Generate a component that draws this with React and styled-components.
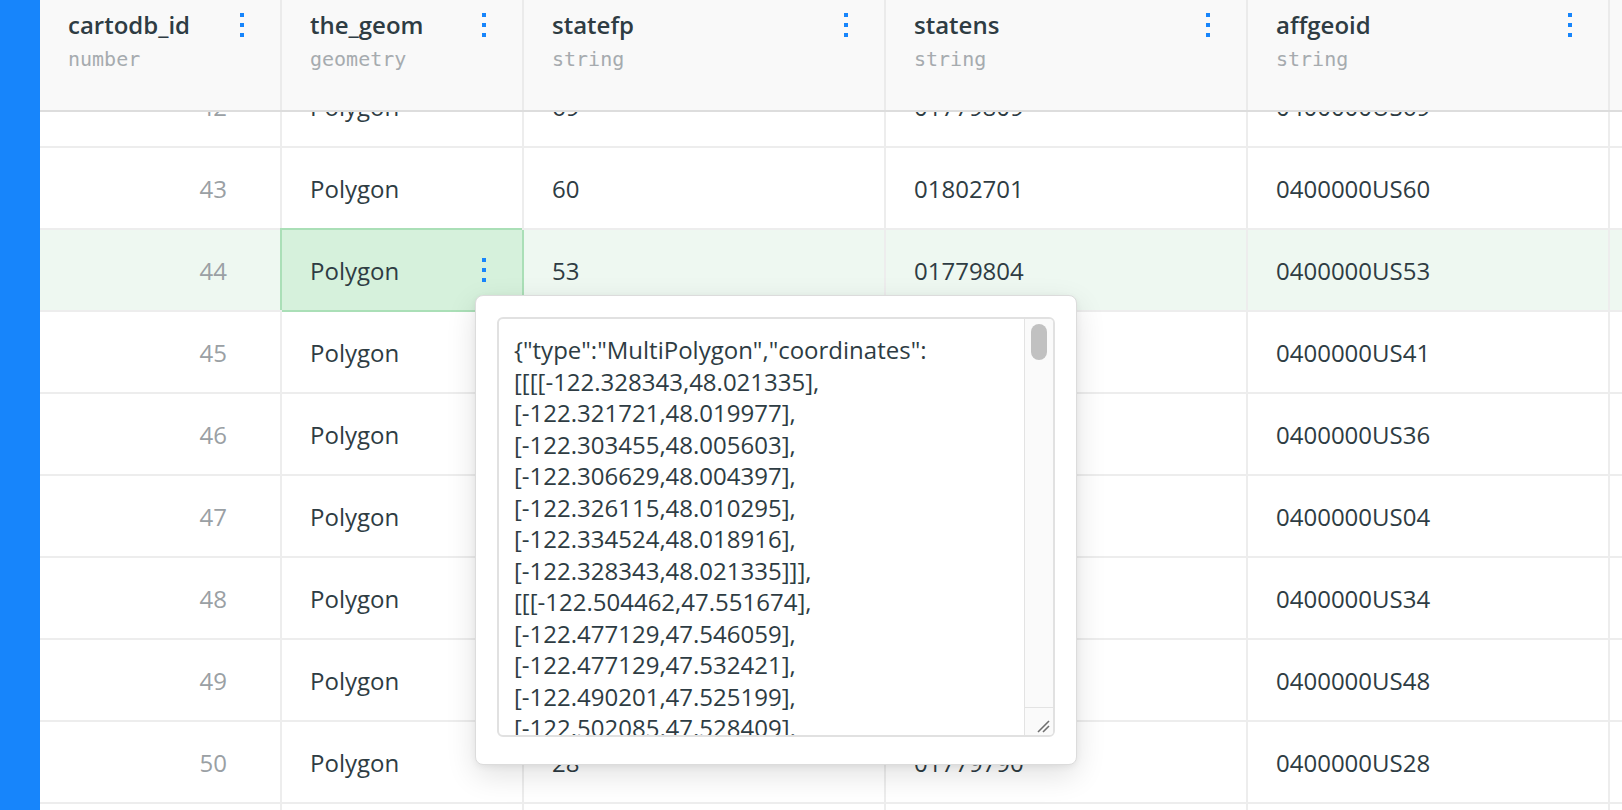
import React from 'react'
import styled, { createGlobalStyle } from 'styled-components'

const GlobalStyle = createGlobalStyle`
  html, body {
    margin: 0;
    padding: 0;
    height: 100%;
    overflow: hidden;
    background: #ffffff;
  }
  body {
    font-family: 'Open Sans', 'Noto Sans', sans-serif;
    color: #2e3c43;
  }
  #root {
    height: 100%;
  }
`

const columns = [
  { key: 'id', title: 'cartodb_id', type: 'number', width: 242, align: 'right' },
  { key: 'geom', title: 'the_geom', type: 'geometry', width: 242 },
  { key: 'statefp', title: 'statefp', type: 'string', width: 362 },
  { key: 'statens', title: 'statens', type: 'string', width: 362 },
  { key: 'affgeoid', title: 'affgeoid', type: 'string', width: 362 },
]

const rows = [
  { id: 42, geom: 'Polygon', statefp: '69', statens: '01779809', affgeoid: '0400000US69' },
  { id: 43, geom: 'Polygon', statefp: '60', statens: '01802701', affgeoid: '0400000US60' },
  { id: 44, geom: 'Polygon', statefp: '53', statens: '01779804', affgeoid: '0400000US53' },
  { id: 45, geom: 'Polygon', statefp: '41', statens: '01155107', affgeoid: '0400000US41' },
  { id: 46, geom: 'Polygon', statefp: '36', statens: '01779796', affgeoid: '0400000US36' },
  { id: 47, geom: 'Polygon', statefp: '04', statens: '01779777', affgeoid: '0400000US04' },
  { id: 48, geom: 'Polygon', statefp: '34', statens: '01779795', affgeoid: '0400000US34' },
  { id: 49, geom: 'Polygon', statefp: '48', statens: '01779801', affgeoid: '0400000US48' },
  { id: 50, geom: 'Polygon', statefp: '28', statens: '01779790', affgeoid: '0400000US28' },
  { id: 51, geom: 'Polygon', statefp: '37', statens: '01027616', affgeoid: '0400000US37' },
]

const geoJson = [
  '{"type":"MultiPolygon","coordinates":',
  '[[[[-122.328343,48.021335],',
  '[-122.321721,48.019977],',
  '[-122.303455,48.005603],',
  '[-122.306629,48.004397],',
  '[-122.326115,48.010295],',
  '[-122.334524,48.018916],',
  '[-122.328343,48.021335]]],',
  '[[[-122.504462,47.551674],',
  '[-122.477129,47.546059],',
  '[-122.477129,47.532421],',
  '[-122.490201,47.525199],',
  '[-122.502085,47.528409],',
  '[-122.507212,47.536011],',
  '[-122.504462,47.551674]]],',
].join('\n')

const SELECTED_ROW = 44

function Kebab() {
  return (
    <Dots>
      <Dot />
      <Dot />
      <Dot />
    </Dots>
  )
}

export default function App() {
  return (
    <>
      <GlobalStyle />
      <Page>
        <SideBar />
        <TableArea>
          <HeaderRow>
            {columns.map((col) => (
              <HeaderCell key={col.key} $width={col.width}>
                <HeaderText>
                  <Title>{col.title}</Title>
                  <TypeLabel>{col.type}</TypeLabel>
                </HeaderText>
                <HeaderKebab>
                  <Kebab />
                </HeaderKebab>
              </HeaderCell>
            ))}
            <HeaderFiller />
          </HeaderRow>
          <Body>
            <BodyScroll>
              {rows.map((row) => {
                const rowSelected = row.id === SELECTED_ROW
                return (
                  <Row key={row.id} $selected={rowSelected}>
                    {columns.map((col) => {
                      const active = rowSelected && col.key === 'geom'
                      return (
                        <Cell
                          key={col.key}
                          $width={col.width}
                          $right={col.align === 'right'}
                          $muted={col.key === 'id'}
                          $active={active}
                        >
                          {row[col.key]}
                          {active && <Kebab />}
                        </Cell>
                      )
                    })}
                    <CellFiller />
                  </Row>
                )
              })}
            </BodyScroll>
          </Body>
        </TableArea>

        <Popover>
          <Field>
            <FieldText>{geoJson}</FieldText>
            <ScrollTrack>
              <Thumb />
              <Corner>
                <svg width='28' height='27' viewBox='0 0 28 27'>
                  <line x1='13' y1='24' x2='24' y2='13' stroke='#6f6f6f' strokeWidth='1.6' />
                  <line x1='18' y1='24' x2='24' y2='18' stroke='#6f6f6f' strokeWidth='1.6' />
                </svg>
              </Corner>
            </ScrollTrack>
          </Field>
        </Popover>
      </Page>
    </>
  )
}

const Page = styled.div`
  position: relative;
  display: flex;
  width: 1622px;
  height: 810px;
  overflow: hidden;
`

const SideBar = styled.div`
  flex: 0 0 40px;
  background: #1785fb;
`

const TableArea = styled.div`
  flex: 1;
  min-width: 0;
  display: flex;
  flex-direction: column;
  overflow: hidden;
`

const HeaderRow = styled.div`
  flex: 0 0 112px;
  display: flex;
  box-sizing: border-box;
  background: #f9f9f9;
  border-bottom: 2px solid #dddddd;
`

const HeaderCell = styled.div`
  flex: 0 0 ${(p) => p.$width}px;
  box-sizing: border-box;
  display: flex;
  align-items: flex-start;
  justify-content: space-between;
  padding: 9px 30px 0 28px;
  border-right: 2px solid #ebebeb;
`

const HeaderFiller = styled.div`
  flex: 1;
`

const HeaderText = styled.div`
  display: flex;
  flex-direction: column;
`

const Title = styled.span`
  font-size: 24px;
  font-weight: 600;
  line-height: 32px;
  color: #2e3c43;
`

const TypeLabel = styled.span`
  font-family: 'DejaVu Sans Mono', 'Liberation Mono', monospace;
  font-size: 20px;
  line-height: 36px;
  color: #a6abaf;
`

const HeaderKebab = styled.div`
  padding-top: 4px;
`

const Dots = styled.span`
  flex: 0 0 16px;
  width: 16px;
  display: flex;
  flex-direction: column;
  align-items: center;
  gap: 6px;
`

const Dot = styled.i`
  display: block;
  width: 4px;
  height: 4px;
  background: #1785fb;
`

const Body = styled.div`
  flex: 1;
  overflow: hidden;
`

// table is scrolled: row 42 sits half under the header
const BodyScroll = styled.div`
  margin-top: -46px;
`

const Row = styled.div`
  display: flex;
  height: 82px;
  background: ${(p) => (p.$selected ? '#eef8f1' : '#ffffff')};
`

const Cell = styled.div`
  flex: 0 0 ${(p) => p.$width}px;
  box-sizing: border-box;
  display: flex;
  align-items: center;
  justify-content: ${(p) => (p.$right ? 'flex-end' : 'space-between')};
  padding: ${(p) => (p.$right ? '0 53px 0 28px' : '0 30px 0 28px')};
  font-size: 24px;
  color: ${(p) => (p.$muted ? '#9aa0a4' : '#2e3c43')};
  white-space: nowrap;
  border-right: 2px solid ${(p) => (p.$active ? '#aadfb7' : '#ededed')};
  border-bottom: 2px solid ${(p) => (p.$active ? '#aadfb7' : '#ededed')};
  background: ${(p) => (p.$active ? '#d6f1dc' : 'transparent')};
  box-shadow: ${(p) => (p.$active ? '-2px -2px 0 0 #aadfb7' : 'none')};
`

const CellFiller = styled.div`
  flex: 1;
  border-bottom: 2px solid #ededed;
`

const Popover = styled.div`
  position: absolute;
  left: 475px;
  top: 295px;
  width: 602px;
  box-sizing: border-box;
  padding: 21px 21px 27px 21px;
  background: #ffffff;
  border: 1px solid #dcdcdc;
  border-radius: 8px;
  box-shadow: 0 10px 30px rgba(0, 0, 0, 0.12), 0 2px 6px rgba(0, 0, 0, 0.06);
  z-index: 5;
`

const Field = styled.div`
  display: flex;
  height: 420px;
  box-sizing: border-box;
  border: 2px solid #e1e1e1;
  border-radius: 6px;
  overflow: hidden;
  background: #ffffff;
`

const FieldText = styled.div`
  flex: 1;
  min-width: 0;
  overflow: hidden;
  padding: 15px;
  white-space: pre;
  font-size: 24px;
  line-height: 31.5px;
  color: #2e3c43;
`

const ScrollTrack = styled.div`
  flex: 0 0 28px;
  display: flex;
  flex-direction: column;
  box-sizing: border-box;
  background: #fafafa;
  border-left: 1px solid #e3e3e3;
`

const Thumb = styled.div`
  width: 16px;
  height: 36px;
  margin: 5px 0 0 6px;
  border-radius: 8px;
  background: #c1c1c1;
`

const Corner = styled.div`
  margin-top: auto;
  height: 28px;
  box-sizing: border-box;
  border-top: 1px solid #e3e3e3;
  background: #fafafa;
  display: flex;
`
